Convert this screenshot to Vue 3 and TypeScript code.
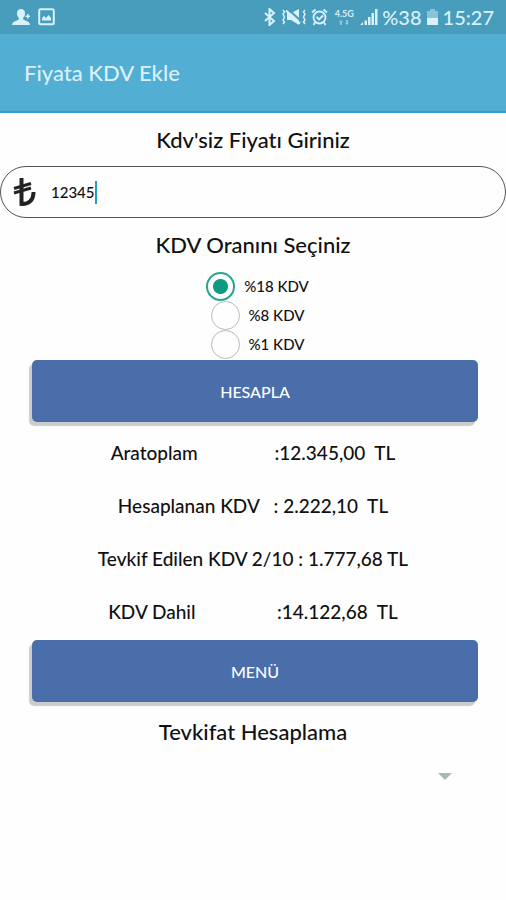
<script setup lang="ts">
import { computed, ref } from 'vue'

interface Rate {
  value: number
  label: string
}

const price = ref('12345')
const rate = ref(18)
const withholding = ref('')

const rates: Rate[] = [
  { value: 18, label: '%18 KDV' },
  { value: 8, label: '%8 KDV' },
  { value: 1, label: '%1 KDV' },
]

const format = (n: number): string =>
  n.toFixed(2).replace('.', ',').replace(/\B(?=(\d{3})+(?!\d))/g, '.')

const calculate = () => {
  const net = Number(price.value) || 0
  const tax = (net * rate.value) / 100
  const withheld = Math.round(tax * 80) / 100
  return { net, tax, withheld, total: net + withheld }
}

const result = ref(calculate())

const lines = computed<string[]>(() => [
  `Aratoplam                :${format(result.value.net)}  TL`,
  `Hesaplanan KDV   : ${format(result.value.tax)}  TL`,
  `Tevkif Edilen KDV 2/10 : ${format(result.value.withheld)} TL`,
  `KDV Dahil                 :${format(result.value.total)}  TL`,
])
</script>

<template>
  <div class="screen">
    <div class="status">
      <div class="group">
        <svg width="19" height="18" viewBox="0 0 19 18" fill="currentColor">
          <path d="M9 1c-2.600 0-4 1.800-4 4.400 0 2 .8 3.400 1.800 4.400v1.800L1.500 14Q0 15 0 17h18q0-2-1.500-3l-5.300-2.400V9.800C12.200 8.800 13 7.400 13 5.400 13 2.800 11.600 1 9 1z" />
          <path d="M15 6h1.500v1.500H18V9h-1.500v1.500H15V9h-1.500V7.500H15z" />
        </svg>
        <svg width="17" height="18" viewBox="0 0 17 18">
          <rect x="1.200" y="1.200" width="14.600" height="15" rx="1.500" fill="none" stroke="currentColor" stroke-width="2" />
          <path d="M4 12.500V10l2-2 2 2 2.500-3L13 10v2.500z" fill="currentColor" />
        </svg>
      </div>
      <div class="group tight">
        <svg width="14" height="18" viewBox="0 0 14 18" fill="none" stroke="currentColor" stroke-width="2">
          <path d="M2 5l9 8-4.500 4V1L11 5l-9 8" />
        </svg>
        <svg width="26" height="18" viewBox="0 0 26 18">
          <path d="M6 5h4l8-4v16l-8-5H6z" fill="currentColor" />
          <path d="M7 1l14 13" stroke="#489dbd" stroke-width="2" />
          <path d="M5 2.500l14 13" stroke="currentColor" stroke-width="2" />
          <path d="M2 2l1.500 2L2 6l1.500 3L2 12l1.500 2L2 16M24 2l-1.500 2L24 6l-1.500 3 1.500 3-1.500 2 1.500 2" fill="none" stroke="currentColor" stroke-width="1.500" />
        </svg>
        <svg width="17" height="18" viewBox="0 0 17 18" fill="none" stroke="currentColor" stroke-width="1.800">
          <circle cx="8.500" cy="9.500" r="6" />
          <path d="M5.500 9l2.500 2.500L12 7.500M1 4.500L4.500 1.500M16 4.500L12.500 1.500M4 14.500L2.500 17M13 14.500l1.500 2.500" />
        </svg>
        <div class="network">
          <span>4.5G</span>
          <svg width="10" height="5" viewBox="0 0 10 5" fill="currentColor" opacity=".5">
            <path d="M1 5V2H0l2-2 2 2H3v3zM7 0v3H6l2 2 2-2H9V0z" />
          </svg>
        </div>
        <svg width="18" height="18" viewBox="0 0 18 18" fill="currentColor">
          <path d="M0 17l3-3v3zM4.500 12.500h2.500V17H4.500zM8 9h2.500v8H8zM11.500 5H14v12h-2.500zM15 1h2.500v16H15z" />
        </svg>
        <span class="clock">%38</span>
        <svg width="13" height="18" viewBox="0 0 13 18" fill="currentColor">
          <path d="M4 1h5v2h3v7H1V3h3z" opacity=".45" />
          <path d="M1 10h11v7H1z" />
        </svg>
        <span class="clock">15:27</span>
      </div>
    </div>

    <header class="appbar">
      <h1>Fiyata KDV Ekle</h1>
    </header>

    <main>
      <h2><label for="price">Kdv'siz Fiyatı Giriniz</label></h2>
      <label class="field">
        <svg width="24" height="30" viewBox="0 0 24 30" fill="none" stroke="#222">
          <path d="M8.500 1v26C16 27.500 20.500 23 20.500 15" stroke-width="4" />
          <path d="M1 11.500l17-5M1 16l17-5" stroke-width="3" />
        </svg>
        <span class="entry">
          <input id="price" v-model="price" type="text" inputmode="decimal" />
          <span class="caret"></span>
        </span>
      </label>

      <h2 id="rates">KDV Oranını Seçiniz</h2>
      <div class="rates" role="radiogroup" aria-labelledby="rates">
        <label v-for="r in rates" :key="r.value">
          <input v-model="rate" type="radio" name="rate" :value="r.value" />
          <span>{{ r.label }}</span>
        </label>
      </div>

      <button type="button" @click="result = calculate()">HESAPLA</button>
      <div class="results">
        <p v-for="line in lines" :key="line">{{ line }}</p>
      </div>
      <button type="button">MENÜ</button>

      <h2 class="last"><label for="withholding">Tevkifat Hesaplama</label></h2>
      <div class="spinner">
        <select id="withholding" v-model="withholding">
          <option value=""></option>
        </select>
        <svg width="14" height="7" viewBox="0 0 14 7" fill="#a9b8b5"><path d="M0 0h14L7 7z" /></svg>
      </div>
    </main>
  </div>
</template>

<style>
body {
  margin: 0;
  background: #fefefe;
}
</style>

<style scoped>
.screen {
  font-family: Lato, "Noto Sans", sans-serif;
  font-weight: 500;
  font-variant-ligatures: none;
  color: #111;
}

.status {
  display: flex;
  justify-content: space-between;
  align-items: center;
  height: 34px;
  padding: 0 12px;
  background: #489dbd;
  color: #d9f1fa;
}

.group {
  display: flex;
  align-items: center;
  gap: 7px;
}

.tight {
  gap: 4px;
}

.network {
  display: flex;
  flex-direction: column;
  align-items: center;
  gap: 2px;
  width: 24px;
  font-size: 9px;
  line-height: 9px;
  font-weight: 700;
}

.clock {
  font-size: 20px;
  line-height: 24px;
}

.appbar {
  display: flex;
  align-items: center;
  height: 77px;
  padding: 0 24px;
  border-bottom: 2px solid #329fc9;
  background: #52aed2;
  color: #d9f1fa;
}

h1 {
  margin: 0;
  font-size: 22px;
  line-height: 28px;
  font-weight: 500;
}

h2 {
  margin: 0;
  font-size: 22px;
  line-height: 53px;
  font-weight: 500;
  text-align: center;
}

.field {
  display: flex;
  align-items: center;
  gap: 14px;
  height: 50px;
  padding: 0 12px;
  border: 1px solid #555;
  border-radius: 26px;
}

.entry {
  display: flex;
  align-items: center;
}

.entry input {
  field-sizing: content;
  min-width: 8px;
  padding: 0;
  border: 0;
  outline: 0;
  background: none;
  color: inherit;
  font: inherit;
  font-size: 15px;
}

.caret {
  width: 2px;
  height: 23px;
  background: #18a0c8;
}

.rates {
  display: flex;
  flex-direction: column;
  align-items: center;
  padding: 1px 0 1px 9px;
}

.rates label {
  display: flex;
  align-items: center;
  gap: 9px;
  font-size: 15px;
  line-height: 29px;
}

.rates input {
  appearance: none;
  box-sizing: border-box;
  width: 29px;
  height: 29px;
  margin: 0;
  border: 1px solid #b5bcbc;
  border-radius: 50%;
}

.rates input:checked {
  border: 2px solid #2aa390;
  background: radial-gradient(circle, #0c9a82 7px, transparent 8px);
}

button {
  display: block;
  width: calc(100% - 60px);
  height: 62px;
  margin: 0 28px 0 32px;
  border: 0;
  border-radius: 5px;
  background: #4a6eaa;
  box-shadow: -3px 4px 1px #ccc;
  color: #fff;
  font: inherit;
  font-size: 16px;
}

.results {
  padding: 4px 0 2px;
}

p {
  margin: 0;
  font-size: 19px;
  line-height: 53px;
  text-align: center;
  white-space: pre;
}

.last {
  line-height: 60px;
}

.spinner {
  display: flex;
  align-items: center;
  height: 28px;
  padding: 0 54px 0 32px;
}

select {
  flex: 1;
  appearance: none;
  height: 24px;
  border: 0;
  background: none;
  font: inherit;
}
</style>
